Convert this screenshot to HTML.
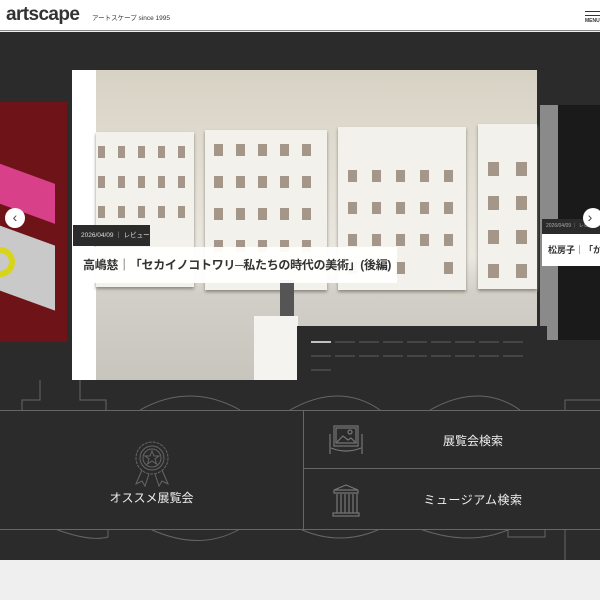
<!DOCTYPE html>
<html><head><meta charset="utf-8"><style>
*{margin:0;padding:0;box-sizing:border-box}
body{width:600px;height:600px;overflow:hidden;background:#efefef;font-family:"Liberation Sans","Noto Sans CJK JP",sans-serif;position:relative}
.hdr{position:absolute;left:0;top:0;width:600px;height:31px;background:#fff;border-bottom:1px solid #888}
.logo{position:absolute;left:6px;top:4px;font-size:19px;font-weight:bold;color:#333;letter-spacing:-.6px}
.sub{position:absolute;left:92px;top:12px;font-size:6.5px;color:#333;white-space:nowrap}
.menu{position:absolute;left:585px;top:11px;width:15px}
.menu i{display:block;height:1px;background:#333;margin-bottom:3px}
.menu span{display:block;font-size:5px;font-weight:bold;color:#333;line-height:5px}
.dark{position:absolute;left:0;top:32px;width:600px;height:528px;background:#2b2b2b;overflow:hidden}
.abs{position:absolute}
.frame{position:absolute;background:#f3f1ec;box-shadow:0 2px 3px #8a877f}
</style></head><body>
<div class="hdr"><div class="logo">artscape</div><div class="sub">アートスケープ since 1995</div>
<div class="menu"><i></i><i></i><span>MENU</span></div></div>
<div class="dark">
<svg class="abs" style="left:0;top:0" width="600" height="528">
<g fill="none" stroke="#666" stroke-width="1">
<path d="M40 348 V368 H22 V378 M80 348 V368 H106 V378"/>
<path d="M140 378 Q190 350 240 378 M290 378 Q340 350 380 378 M430 378 Q480 350 520 378"/>
<path d="M565 378 V368 H600"/>
<path d="M55 497 Q90 510 108 505 V497 M150 497 Q200 520 240 497 M300 497 Q340 515 380 497 M420 497 Q470 515 510 497 M508 497 V505 H545 V497 M565 497 V528"/>
</g></svg>
<div class="abs" style="left:0;top:70px;width:67px;height:240px;background:#6e1418"></div>
<div class="abs" style="left:-10px;top:140px;width:65px;height:40px;background:#d9408a;transform:skewY(20deg)"></div>
<div class="abs" style="left:-20px;top:200px;width:75px;height:65px;background:#c9c9c9;transform:skewY(20deg)"></div>
<div class="abs" style="left:-15px;top:215px;width:30px;height:30px;border-radius:50%;border:6px solid #d8d41a"></div>
<div class="abs" style="left:540px;top:73px;width:60px;height:235px;background:#1a1a1a"></div>
<div class="abs" style="left:540px;top:73px;width:18px;height:235px;background:#8a8a8a"></div>
<div class="abs" style="left:72px;top:38px;width:25px;height:310px;background:#fff"></div>
<div class="abs" style="left:96px;top:38px;width:441px;height:310px;background:linear-gradient(#d8d2c4 0%,#e0dbd0 25%,#ebe8e1 60%,#d2cfc8 72%,#c8c5bd 100%)"></div>
<div class="frame" style="left:96px;top:100px;width:98px;height:155px"></div>
<div class="frame" style="left:205px;top:98px;width:122px;height:160px"></div>
<div class="frame" style="left:338px;top:95px;width:128px;height:163px"></div>
<div class="frame" style="left:478px;top:92px;width:59px;height:165px"></div>
<svg class="abs" style="left:96px;top:100px" width="441" height="160">
<g fill="#8a7a6a" opacity=".75">
<rect x="2" y="14" width="7" height="12"/><rect x="22" y="14" width="7" height="12"/><rect x="42" y="14" width="7" height="12"/><rect x="62" y="14" width="7" height="12"/><rect x="82" y="14" width="7" height="12"/>
<rect x="2" y="44" width="7" height="12"/><rect x="22" y="44" width="7" height="12"/><rect x="42" y="44" width="7" height="12"/><rect x="62" y="44" width="7" height="12"/><rect x="82" y="44" width="7" height="12"/>
<rect x="2" y="74" width="7" height="12"/><rect x="22" y="74" width="7" height="12"/><rect x="42" y="74" width="7" height="12"/><rect x="62" y="74" width="7" height="12"/><rect x="82" y="74" width="7" height="12"/>
<rect x="118" y="12" width="9" height="12"/><rect x="140" y="12" width="9" height="12"/><rect x="162" y="12" width="9" height="12"/><rect x="184" y="12" width="9" height="12"/><rect x="206" y="12" width="9" height="12"/>
<rect x="118" y="44" width="9" height="12"/><rect x="140" y="44" width="9" height="12"/><rect x="162" y="44" width="9" height="12"/><rect x="184" y="44" width="9" height="12"/><rect x="206" y="44" width="9" height="12"/>
<rect x="118" y="76" width="9" height="12"/><rect x="140" y="76" width="9" height="12"/><rect x="162" y="76" width="9" height="12"/><rect x="184" y="76" width="9" height="12"/><rect x="206" y="76" width="9" height="12"/>
<rect x="118" y="108" width="9" height="12"/><rect x="140" y="108" width="9" height="12"/><rect x="162" y="108" width="9" height="12"/><rect x="184" y="108" width="9" height="12"/><rect x="206" y="108" width="9" height="12"/>
<rect x="252" y="38" width="9" height="12"/><rect x="276" y="38" width="9" height="12"/><rect x="300" y="38" width="9" height="12"/><rect x="324" y="38" width="9" height="12"/><rect x="348" y="38" width="9" height="12"/>
<rect x="252" y="70" width="9" height="12"/><rect x="276" y="70" width="9" height="12"/><rect x="300" y="70" width="9" height="12"/><rect x="324" y="70" width="9" height="12"/><rect x="348" y="70" width="9" height="12"/>
<rect x="252" y="102" width="9" height="12"/><rect x="276" y="102" width="9" height="12"/><rect x="300" y="102" width="9" height="12"/><rect x="324" y="102" width="9" height="12"/><rect x="348" y="102" width="9" height="12"/>
<rect x="252" y="130" width="9" height="12"/><rect x="300" y="130" width="9" height="12"/><rect x="348" y="130" width="9" height="12"/>
<rect x="392" y="30" width="11" height="14"/><rect x="420" y="30" width="11" height="14"/>
<rect x="392" y="64" width="11" height="14"/><rect x="420" y="64" width="11" height="14"/>
<rect x="392" y="98" width="11" height="14"/><rect x="420" y="98" width="11" height="14"/>
<rect x="392" y="132" width="11" height="14"/><rect x="420" y="132" width="11" height="14"/>
</g></svg>
<div class="abs" style="left:280px;top:248px;width:14px;height:40px;background:#555"></div>
<div class="abs" style="left:254px;top:284px;width:44px;height:64px;background:#f4f3f0"></div>
<div class="abs" style="left:297px;top:294px;width:250px;height:54px;background:#2b2b2b"></div>
<svg class="abs" style="left:297px;top:294px" width="250" height="54">
<g stroke="#555" stroke-width="1.2"><path d="M14 16h20M38 16h20M62 16h20M86 16h20M110 16h20M134 16h20M158 16h20M182 16h20M206 16h20M14 30h20M38 30h20M62 30h20M86 30h20M110 30h20M134 30h20M158 30h20M182 30h20M206 30h20M14 44h20"/></g>
<path d="M14 16h20" stroke="#eee" stroke-width="1.5"/></svg>
<div class="abs" style="left:73px;top:193px;width:77px;height:21px;background:#2b2b2b;color:#ddd;font-size:6.5px;line-height:21px;padding-left:8px;white-space:nowrap">2026/04/09 ｜ レビュー</div>
<div class="abs" style="left:73px;top:215px;width:324px;height:36px;background:rgba(255,255,255,.95);color:#333;font-size:12px;font-weight:bold;line-height:36px;padding-left:10px;white-space:nowrap;letter-spacing:-.3px">高嶋慈｜「セカイノコトワリ─私たちの時代の美術」(後編)</div>
<div class="abs" style="left:542px;top:187px;width:58px;height:15px;background:#2b2b2b;color:#aaa;font-size:5px;line-height:15px;padding-left:4px;white-space:nowrap">2026/04/09 ｜ レビュー</div>
<div class="abs" style="left:542px;top:202px;width:58px;height:32px;background:#fff;color:#333;font-size:9px;font-weight:bold;line-height:32px;padding-left:6px;white-space:nowrap;overflow:hidden">松房子｜「か</div>
<div class="abs" style="left:5px;top:176px;width:20px;height:20px;border-radius:50%;background:#fff;color:#444;font-size:14px;line-height:19px;text-align:center">‹</div>
<div class="abs" style="left:583px;top:176px;width:20px;height:20px;border-radius:50%;background:#fff;color:#444;font-size:14px;line-height:19px;text-align:center;padding-right:6px">›</div>
<div class="abs" style="left:0;top:378px;width:600px;height:120px;background:#2b2b2b;border-top:1px solid #666;border-bottom:1px solid #666"></div>
<div class="abs" style="left:303px;top:378px;width:1px;height:120px;background:#666"></div>
<div class="abs" style="left:303px;top:436px;width:297px;height:1px;background:#666"></div>
<svg class="abs" style="left:130px;top:400px" width="44" height="70"><g fill="none" stroke="#666" stroke-width="1">
<circle cx="22" cy="26" r="16" stroke-dasharray="3 1"/><circle cx="22" cy="26" r="12"/><circle cx="22" cy="26" r="9"/>
<path d="M22 19l2 5h5l-4 3 1.5 5-4.5-3-4.5 3 1.5-5-4-3h5z"/><path d="M12 38l-6 14 6-3 3 5 4-12M32 38l6 14-6-3-3 5-4-12"/></g></svg>
<div class="abs" style="left:0;top:457px;width:303px;text-align:center;color:#eee;font-size:12px">オススメ展覧会</div>
<svg class="abs" style="left:328px;top:392px" width="36" height="32"><g fill="none" stroke="#777" stroke-width="1.2">
<rect x="6" y="2" width="24" height="20"/><rect x="8" y="4" width="20" height="15"/><path d="M9 18l6-6 5 4 3-2 4 4"/><circle cx="22" cy="8" r="2"/>
<path d="M2 10v20M34 10v20M3 24q15 6 30 0"/></g></svg>
<div class="abs" style="left:303px;top:400px;width:340px;text-align:center;color:#eee;font-size:12px">展覧会検索</div>
<svg class="abs" style="left:331px;top:451px" width="30" height="34"><g fill="none" stroke="#777" stroke-width="1.2">
<path d="M3 7l12-5 12 5zM3 7v3h24V7"/><path d="M6 11v19M10 11v19M14 11v19M18 11v19M22 11v19M26 11v19"/><rect x="2" y="30" width="26" height="3"/></g></svg>
<div class="abs" style="left:303px;top:459px;width:340px;text-align:center;color:#eee;font-size:12px;letter-spacing:.5px">ミュージアム検索</div>
</div>
</body></html>
